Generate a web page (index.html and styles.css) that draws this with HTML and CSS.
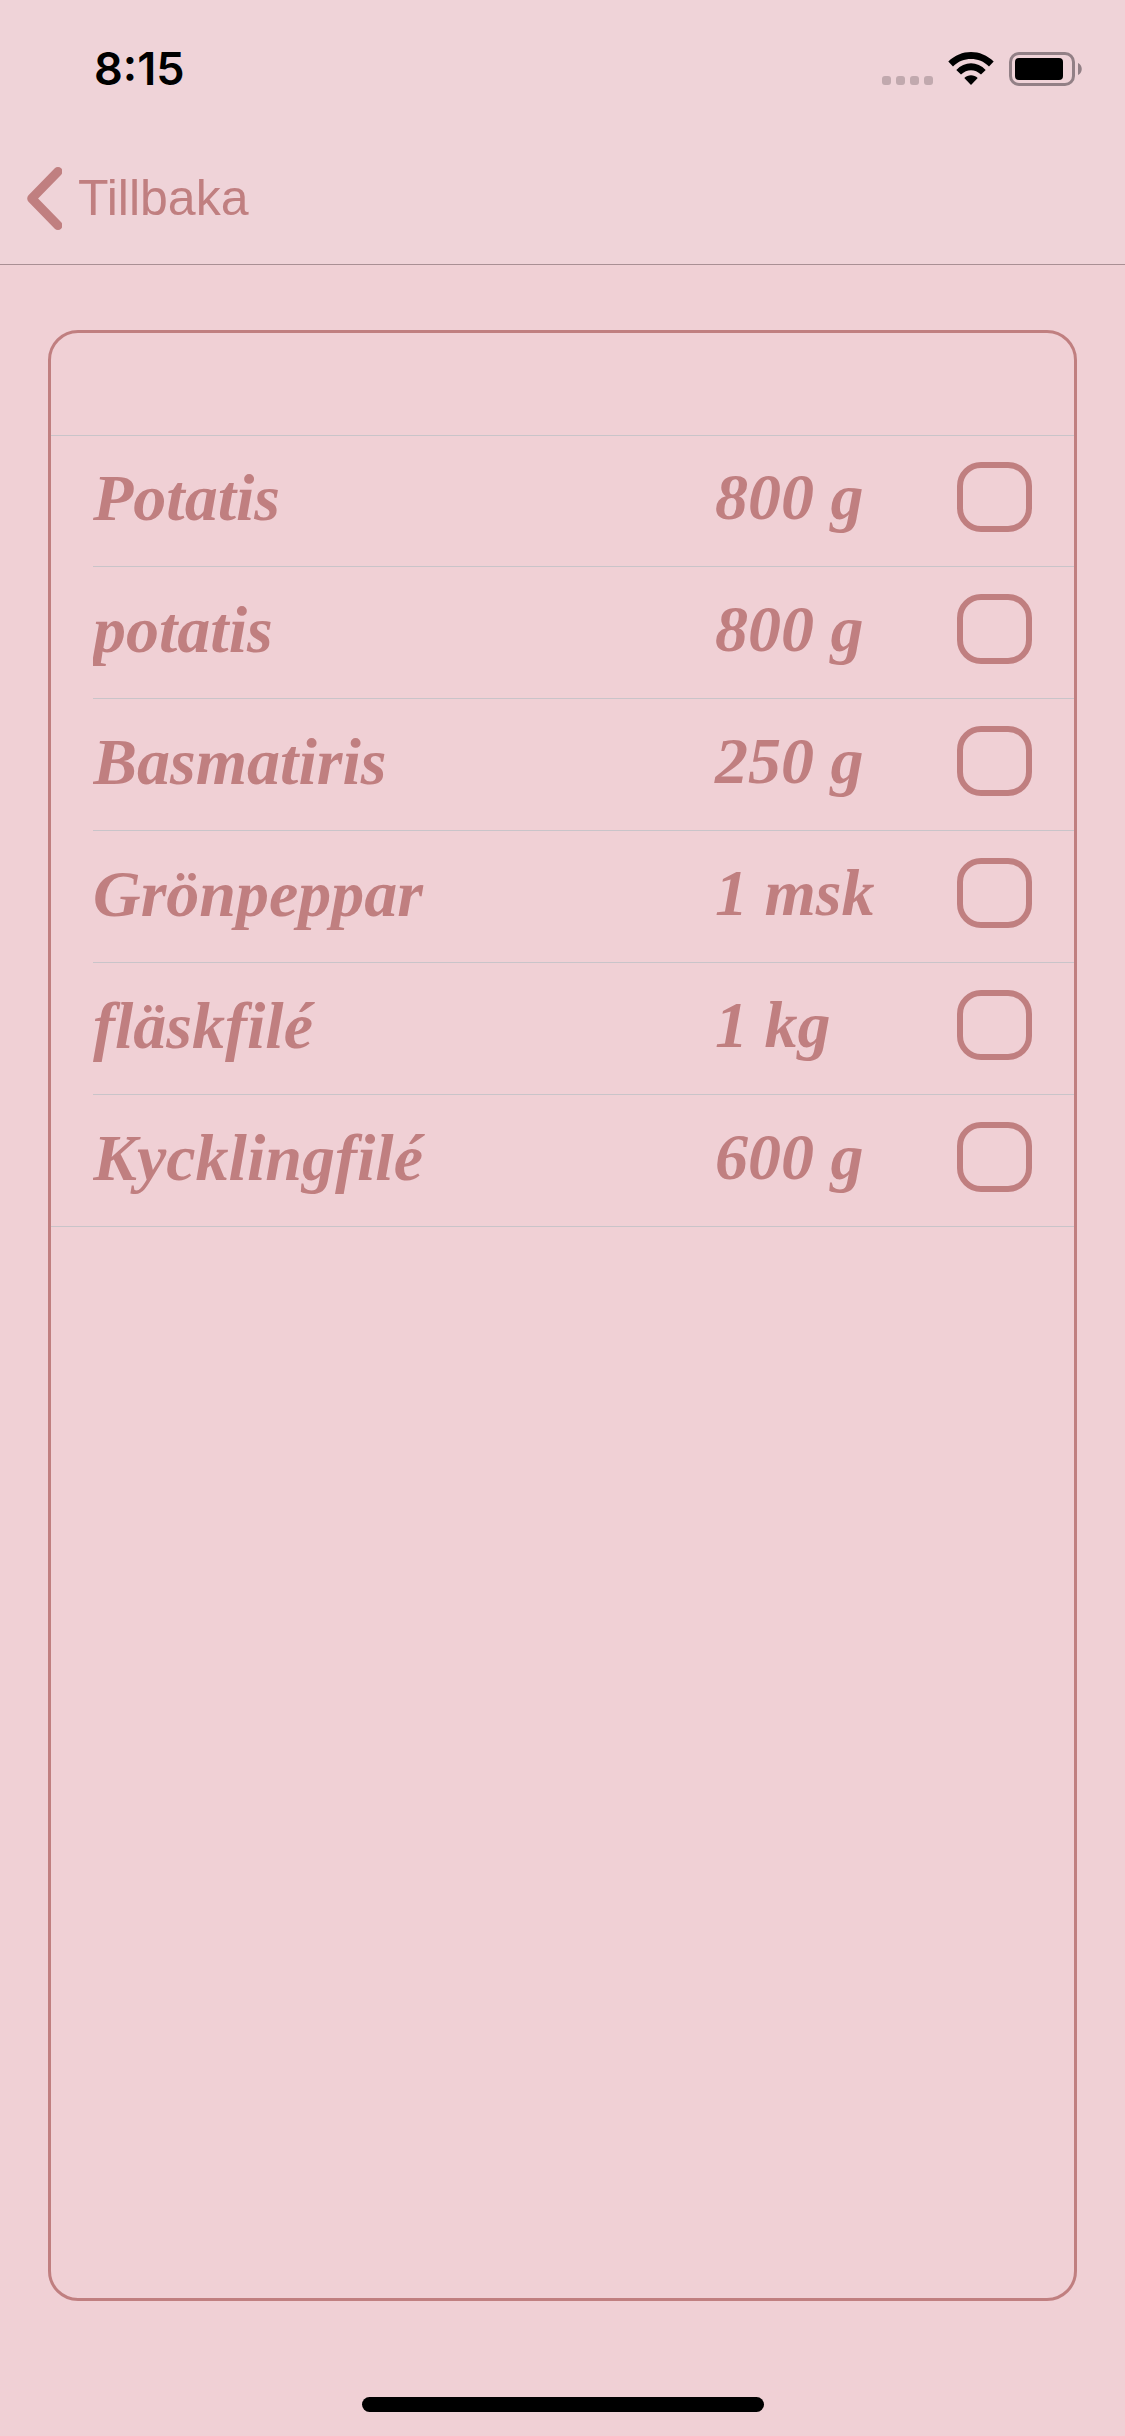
FILE: index.html
```html
<!DOCTYPE html>
<html lang="sv">
<head>
<meta charset="utf-8">
<meta name="viewport" content="width=device-width, initial-scale=1">
<title>Inköpslista</title>
<link rel="stylesheet" href="styles.css">
</head>
<body>
<header class="top">
  <div class="status">
    <span class="time">8:15</span>
    <div class="indicators">
      <svg class="dots" width="51" height="34" viewBox="0 0 51 34" aria-hidden="true">
        <rect x="0" y="24" width="9" height="9" rx="3"/>
        <rect x="14" y="24" width="9" height="9" rx="3"/>
        <rect x="28" y="24" width="9" height="9" rx="3"/>
        <rect x="42" y="24" width="9" height="9" rx="3"/>
      </svg>
      <svg width="46" height="34" viewBox="0 0 46 34" aria-hidden="true">
        <path d="M0.3 9.6C13 -3.2 33 -3.2 45.7 9.6L41 14.4C31 4.600 15 4.600 5 14.400Z"/>
        <path d="M8.300 18C16.500 9 29.500 9 37.700 18L33 22.600C27 16.800 19 16.800 13 22.600Z"/>
        <path d="M16.300 26C20 22.200 26 22.200 29.700 26L23 33Z"/>
      </svg>
      <svg width="73" height="34" viewBox="0 0 73 34" aria-hidden="true">
        <rect class="shell" x="1.500" y="1.500" width="63" height="31" rx="8.500"/>
        <rect x="6" y="6" width="48" height="22" rx="4"/>
        <path class="cap" d="M69 11C74 13 74 21 69 23Z"/>
      </svg>
    </div>
  </div>
  <nav class="nav">
    <a class="back" href="#">
      <svg width="36" height="64" viewBox="0 0 36 64" aria-hidden="true">
        <path d="M32 5.500L5.700 32.500L32 59.500"/>
      </svg>
      <span>Tillbaka</span>
    </a>
  </nav>
</header>
<main class="card">
  <div class="card-head"></div>
  <ul class="list">
    <li class="row"><label class="name" for="i1">Potatis</label><span class="amount">800 g</span><input class="check" type="checkbox" id="i1"></li>
    <li class="row"><label class="name" for="i2">potatis</label><span class="amount">800 g</span><input class="check" type="checkbox" id="i2"></li>
    <li class="row"><label class="name" for="i3">Basmatiris</label><span class="amount">250 g</span><input class="check" type="checkbox" id="i3"></li>
    <li class="row"><label class="name" for="i4">Grönpeppar</label><span class="amount">1 msk</span><input class="check" type="checkbox" id="i4"></li>
    <li class="row"><label class="name" for="i5">fläskfilé</label><span class="amount">1 kg</span><input class="check" type="checkbox" id="i5"></li>
    <li class="row"><label class="name" for="i6">Kycklingfilé</label><span class="amount">600 g</span><input class="check" type="checkbox" id="i6"></li>
  </ul>
</main>
<footer class="bottom"><div class="home-bar"></div></footer>
</body>
</html>
```
FILE: styles.css
```css
:root {
  --accent: #c07f80;
  --page: #f0d0d5;
  --bar: #efd3d8;
  --line: #c9c4c9;
}

* {
  box-sizing: border-box;
}

body {
  margin: 0;
  min-height: 100vh;
  display: flex;
  flex-direction: column;
  background: var(--page);
  color: var(--accent);
}

.top {
  background: var(--bar);
  border-bottom: 1px solid #a98f94;
}

.status {
  display: flex;
  align-items: center;
  justify-content: space-between;
  height: 132px;
  padding: 6px 43px 0 94px;
  color: #000;
}

.time {
  font: 600 45px/54px Inter, "Liberation Sans", sans-serif;
}

.indicators {
  display: flex;
  gap: 15px;
}

.dots {
  fill: #c1a9ae;
}

.shell {
  fill: none;
  stroke: #928086;
  stroke-width: 3;
}

.cap {
  fill: #928086;
}

.nav {
  display: flex;
  align-items: center;
  height: 132px;
  padding-left: 26px;
}

.back {
  display: flex;
  align-items: center;
  gap: 16px;
  color: var(--accent);
  font: 50px/60px "Liberation Sans", Arial, sans-serif;
  text-decoration: none;
}

.back path {
  fill: none;
  stroke: var(--accent);
  stroke-width: 9;
  stroke-linecap: round;
  stroke-linejoin: round;
}

.card {
  flex: 1;
  margin: 65px 48px 0;
  border: 3px solid var(--accent);
  border-radius: 30px;
}

.card-head {
  height: 103px;
  border-bottom: 1px solid var(--line);
}

.list {
  margin: -1px 0 0;
  padding: 0;
  list-style: none;
  border-bottom: 1px solid var(--line);
  font: italic bold 66px/76px "Liberation Serif", "Times New Roman", serif;
}

.row {
  display: grid;
  grid-template-columns: 1fr 242px 75px;
  align-items: center;
  height: 132px;
  margin-left: 42px;
  padding: 0 42px 8px 0;
  border-bottom: 1px solid var(--line);
}

.row:last-child {
  height: 131px;
  border-bottom: 0;
}

.name {
  overflow: hidden;
  padding-top: 3px;
}

.check {
  appearance: none;
  width: 75px;
  height: 70px;
  margin: 0;
  border: 6px solid var(--accent);
  border-radius: 24px;
}

.check:checked {
  background: var(--accent);
}

.bottom {
  display: flex;
  justify-content: center;
  align-items: flex-end;
  height: 135px;
  padding-bottom: 24px;
}

.home-bar {
  width: 402px;
  height: 15px;
  border-radius: 8px;
  background: #000;
}
```
